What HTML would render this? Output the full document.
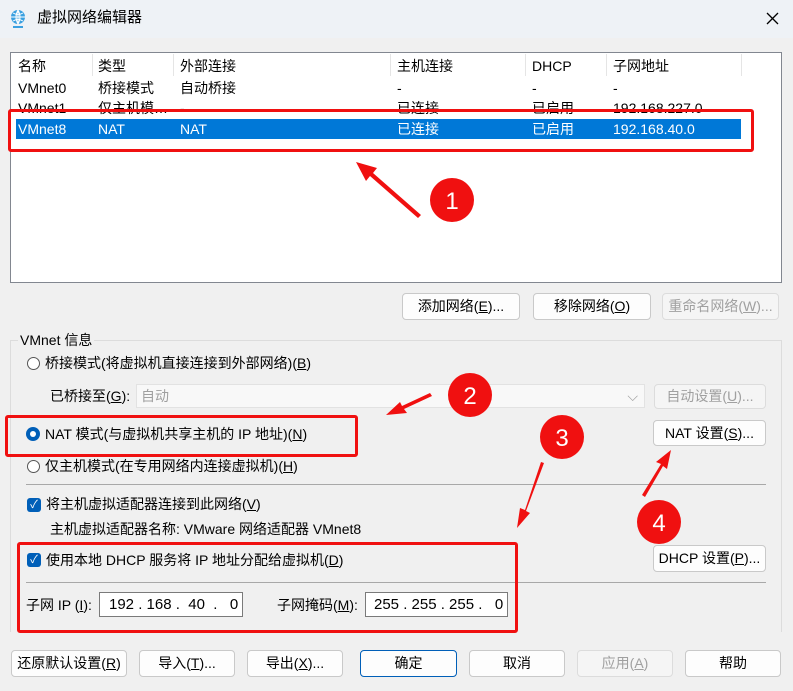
<!DOCTYPE html>
<html><head><meta charset="utf-8"><style>
body{margin:0;width:793px;height:691px;overflow:hidden;background:#f0f0f0;font-family:"Liberation Sans","Noto Sans CJK SC",sans-serif;font-size:14px;color:#000;position:relative}
.a{position:absolute;white-space:nowrap;line-height:18px}
.btn{position:absolute;border:1px solid #c9c9c9;background:#fdfdfd;border-radius:4px;text-align:center;box-sizing:border-box;font-size:14px}
.dis{color:#a0a0a0;background:#f5f5f5;border-color:#dcdcdc}
.sep{position:absolute;height:1px;background:#a8a8a8}
.rb{position:absolute;width:13px;height:13px;border:1px solid #555;border-radius:50%;box-sizing:border-box;background:#fff}
.cb{position:absolute;width:14px;height:14px;border-radius:3px;background:#005fb8;color:#fff;font-size:11px;text-align:center;line-height:14px}
.red{position:absolute;border:3px solid #f01010;border-radius:3px;box-sizing:border-box}
.inp{position:absolute;background:#fff;border:1px solid #7a7a7a;box-sizing:border-box;font-size:15px;line-height:23px}
</style></head><body>
<div class="a" style="left:0;top:0;width:793px;height:38px;background:#eef2f6"></div>
<svg class="a" style="left:9px;top:9px" width="18" height="20" viewBox="0 0 18 20"><circle cx="9" cy="8" r="7" fill="#3aa0e0"/><path d="M2 8h14M9 1v14M4 4q5 3 10 0M4 12q5-3 10 0M9 1q-4 7 0 14M9 1q4 7 0 14" stroke="#fff" stroke-width="1" fill="none"/><rect x="4" y="17" width="10" height="2" fill="#3aa0e0"/></svg>
<div class="a" style="left:37px;top:9px;font-size:15px">虚拟网络编辑器</div>
<svg class="a" style="left:766px;top:12px" width="13" height="13"><path d="M1 1L12 12M12 1L1 12" stroke="#000" stroke-width="1.3"/></svg>

<div class="a" style="left:10px;top:52px;width:772px;height:231px;background:#fff;border:1px solid #828790;box-sizing:border-box"></div>
<div class="a" style="left:92px;top:54px;width:1px;height:22px;background:#e5e5e5"></div>
<div class="a" style="left:173px;top:54px;width:1px;height:22px;background:#e5e5e5"></div>
<div class="a" style="left:390px;top:54px;width:1px;height:22px;background:#e5e5e5"></div>
<div class="a" style="left:525px;top:54px;width:1px;height:22px;background:#e5e5e5"></div>
<div class="a" style="left:606px;top:54px;width:1px;height:22px;background:#e5e5e5"></div>
<div class="a" style="left:741px;top:54px;width:1px;height:22px;background:#e5e5e5"></div>
<div class="a" style="left:16px;top:119px;width:725px;height:20px;background:#0078d7"></div>
<div class="a" style="top:57px;left:18px">名称</div><div class="a" style="top:57px;left:98px">类型</div><div class="a" style="top:57px;left:180px">外部连接</div><div class="a" style="top:57px;left:397px">主机连接</div><div class="a" style="top:57px;left:532px">DHCP</div><div class="a" style="top:57px;left:613px">子网地址</div>
<div class="a" style="top:79px;left:18px">VMnet0</div><div class="a" style="top:79px;left:98px">桥接模式</div><div class="a" style="top:79px;left:180px">自动桥接</div><div class="a" style="top:79px;left:397px">-</div><div class="a" style="top:79px;left:532px">-</div><div class="a" style="top:79px;left:613px">-</div>
<div class="a" style="top:99px;left:18px">VMnet1</div><div class="a" style="top:99px;left:98px">仅主机模…</div><div class="a" style="top:99px;left:180px">-</div><div class="a" style="top:99px;left:397px">已连接</div><div class="a" style="top:99px;left:532px">已启用</div><div class="a" style="top:99px;left:613px">192.168.227.0</div>
<div style="color:#fff"><div class="a" style="top:120px;left:18px">VMnet8</div><div class="a" style="top:120px;left:98px">NAT</div><div class="a" style="top:120px;left:180px">NAT</div><div class="a" style="top:120px;left:397px">已连接</div><div class="a" style="top:120px;left:532px">已启用</div><div class="a" style="top:120px;left:613px">192.168.40.0</div></div>

<div class="btn" style="left:402px;top:293px;width:118px;height:27px;line-height:25px">添加网络(<u>E</u>)...</div>
<div class="btn" style="left:533px;top:293px;width:118px;height:27px;line-height:25px">移除网络(<u>O</u>)</div>
<div class="btn dis" style="left:662px;top:293px;width:117px;height:27px;line-height:25px">重命名网络(<u>W</u>)...</div>

<div class="a" style="left:10px;top:340px;width:772px;height:292px;border:1px solid #dcdcdc;border-bottom:none;box-sizing:border-box"></div>
<div class="a" style="left:18px;top:331px;background:#f0f0f0;padding:0 2px">VMnet 信息</div>
<div class="rb" style="left:27px;top:357px"></div><div class="a" style="left:45px;top:354px">桥接模式(将虚拟机直接连接到外部网络)(<u>B</u>)</div>
<div class="a" style="left:50px;top:387px">已桥接至(<u>G</u>):</div>
<div class="a" style="left:136px;top:384px;width:509px;height:24px;background:#f8f8f8;border:1px solid #e2e2e2;box-sizing:border-box;color:#a0a0a0;line-height:22px;padding-left:4px">自动<span style="position:absolute;right:6px">⌵</span></div>
<div class="btn dis" style="left:654px;top:384px;width:112px;height:25px;line-height:23px">自动设置(<u>U</u>)...</div>
<div class="a" style="left:26px;top:427px;width:14px;height:14px;border-radius:50%;background:#005fb8"></div><div class="a" style="left:30px;top:431px;width:6px;height:6px;border-radius:50%;background:#fff"></div>
<div class="a" style="left:45px;top:425px">NAT 模式(与虚拟机共享主机的 IP 地址)(<u>N</u>)</div>
<div class="btn" style="left:653px;top:420px;width:113px;height:26px;line-height:24px">NAT 设置(<u>S</u>)...</div>
<div class="rb" style="left:27px;top:460px"></div><div class="a" style="left:45px;top:457px">仅主机模式(在专用网络内连接虚拟机)(<u>H</u>)</div>
<div class="sep" style="left:26px;top:484px;width:740px"></div>
<div class="cb" style="left:27px;top:498px">✓</div><div class="a" style="left:46px;top:495px">将主机虚拟适配器连接到此网络(<u>V</u>)</div>
<div class="a" style="left:50px;top:520px">主机虚拟适配器名称: VMware 网络适配器 VMnet8</div>
<div class="cb" style="left:27px;top:553px">✓</div><div class="a" style="left:46px;top:551px">使用本地 DHCP 服务将 IP 地址分配给虚拟机(<u>D</u>)</div>
<div class="btn" style="left:653px;top:545px;width:113px;height:27px;line-height:25px">DHCP 设置(<u>P</u>)...</div>
<div class="sep" style="left:26px;top:582px;width:740px"></div>
<div class="a" style="left:26px;top:596px">子网 IP (<u>I</u>):</div>
<div class="inp" style="left:99px;top:592px;width:144px;height:25px;padding-left:9px">192 . 168 .&nbsp; 40&nbsp; .&nbsp;&nbsp; 0</div>
<div class="a" style="left:277px;top:596px">子网掩码(<u>M</u>):</div>
<div class="inp" style="left:365px;top:592px;width:143px;height:25px;padding-left:8px">255 . 255 . 255 .&nbsp;&nbsp; 0</div>

<div class="btn" style="left:11px;top:650px;width:116px;height:27px;line-height:25px">还原默认设置(<u>R</u>)</div>
<div class="btn" style="left:139px;top:650px;width:96px;height:27px;line-height:25px">导入(<u>T</u>)...</div>
<div class="btn" style="left:247px;top:650px;width:96px;height:27px;line-height:25px">导出(<u>X</u>)...</div>
<div class="btn" style="left:360px;top:650px;width:97px;height:27px;line-height:25px;border:1px solid #005fb8">确定</div>
<div class="btn" style="left:469px;top:650px;width:96px;height:27px;line-height:25px">取消</div>
<div class="btn dis" style="left:577px;top:650px;width:96px;height:27px;line-height:25px">应用(<u>A</u>)</div>
<div class="btn" style="left:685px;top:650px;width:96px;height:27px;line-height:25px">帮助</div>

<div class="red" style="left:8px;top:109px;width:746px;height:43px"></div>
<div class="red" style="left:5px;top:415px;width:353px;height:42px"></div>
<div class="red" style="left:17px;top:542px;width:501px;height:91px"></div>
<svg class="a" style="left:0;top:0" width="793" height="691">
<g fill="#f01010">
<path d="M418 218 L370 176 L366 181 L356 162 L377 168 L373 173 L421 215Z"/>
<path d="M432 396 L404 409 L407 413 L386 415 L400 402 L402 406 L430 393Z"/>
<path d="M541 462 L525 510 L520 508 L517 528 L530 513 L526 511 L544 463Z"/>
<path d="M645 497 L663 466 L667 469 L671 450 L656 462 L661 464 L642 495Z"/>
<circle cx="452" cy="200" r="22"/><circle cx="470" cy="395" r="22"/><circle cx="562" cy="437" r="22"/><circle cx="659" cy="522" r="22"/>
</g>
<g fill="#fff" font-size="24" text-anchor="middle" font-family="Liberation Sans">
<text x="452" y="209">1</text><text x="470" y="404">2</text><text x="562" y="446">3</text><text x="659" y="531">4</text></g>
</svg>
</body></html>
